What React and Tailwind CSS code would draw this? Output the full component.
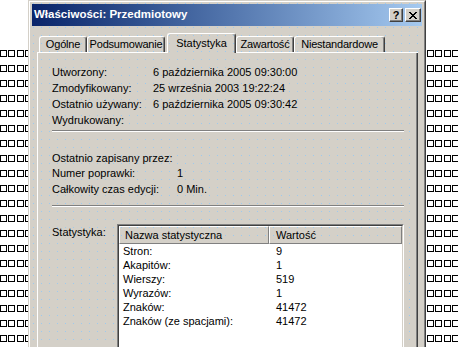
const F = "font-['Liberation_Sans',Arial,sans-serif]";

function Squares({ n }) {
  return (
    <div className="flex flex-col gap-[8px] pt-[50px]">
      {Array.from({ length: 20 }).map((_, r) => (
        <div key={r} className="flex gap-[1.3px] h-[7px]">
          {Array.from({ length: n }).map((_, c) => (
            <div key={c} className="w-[7px] h-[7px] shrink-0 border border-black" />
          ))}
        </div>
      ))}
    </div>
  );
}

function CloseGlyph() {
  const px = [];
  for (let i = 0; i < 7; i++) {
    px.push([i, i], [i + 1, i], [6 - i, i], [7 - i, i]);
  }
  return (
    <svg width="8" height="7" viewBox="0 0 8 7" shapeRendering="crispEdges">
      {px.map(([x, y], k) => (
        <rect key={k} x={x} y={y} width="1" height="1" fill="#000" />
      ))}
    </svg>
  );
}

function CapBtn({ w, children }) {
  return (
    <div
      className={`${w} h-[14px] bg-[#d4d0c8] border-t border-l border-t-white border-l-white border-r border-b border-r-[#404040] border-b-[#404040] shadow-[inset_-1px_-1px_0_#808080] flex items-center justify-center`}
    >
      {children}
    </div>
  );
}

function Tab({ w, label }) {
  return (
    <div className={`${w} h-[17px] shrink-0 border-b border-b-white`}>
      <div className="h-[16px] border-t border-l border-t-white border-l-white border-r border-r-[#404040] shadow-[inset_-1px_0_0_#808080] rounded-t-[3px] flex items-center justify-center whitespace-nowrap tracking-[-0.2px]">
        {label}
      </div>
    </div>
  );
}

function Row({ label, value, lw, h = "h-[16px]" }) {
  return (
    <div className={`flex ${h} items-center whitespace-nowrap`}>
      <div className={`${lw} shrink-0`}>{label}</div>
      <div>{value}</div>
    </div>
  );
}

function Sep() {
  return <div className="h-[2px] border-t border-t-[#808080] border-b border-b-white" />;
}

const stats = [
  ["Stron:", "9"],
  ["Akapitów:", "1"],
  ["Wierszy:", "519"],
  ["Wyrazów:", "1"],
  ["Znaków:", "41472"],
  ["Znaków (ze spacjami):", "41472"],
];

export default function App() {
  return (
    <div className={`${F} w-[458px] h-[347px] bg-white flex overflow-hidden text-[11px] text-black`}>
      <div className="w-[28px] shrink-0 overflow-hidden">
        <Squares n={4} />
      </div>

      <div className="w-[398px] h-[380px] shrink-0 border-t border-l border-t-[#d4d0c8] border-l-[#d4d0c8] border-r border-b border-r-[#404040] border-b-[#404040]">
        <div className="h-full border-t border-l border-t-white border-l-white border-r border-b border-r-[#808080] border-b-[#808080] p-[2px] bg-[#d4d0c8] [background-image:linear-gradient(to_bottom,#d4d0c8_1px,transparent_1px,transparent_2px,#d4d0c8_2px),linear-gradient(to_right,transparent_3px,#9ccaf0_3px,#9ccaf0_4px,transparent_4px)] [background-size:8px_8px] flex flex-col">
          {/* Title bar */}
          <div className="h-[22px] shrink-0 bg-linear-to-r from-[#0a246a] to-[#a6caf0] flex items-center pl-[2px] pr-[1px]">
            <div className="flex-1 text-white font-bold text-[11.5px] leading-none whitespace-nowrap">Właściwości: Przedmiotowy</div>
            <div className="flex gap-[2px]">
              <CapBtn w="w-[14px]">
                <span className="font-bold text-[11px] leading-none">?</span>
              </CapBtn>
              <CapBtn w="w-[16px]">
                <CloseGlyph />
              </CapBtn>
            </div>
          </div>

          {/* Tabs */}
          <div className="ml-[5px] mr-[4px] mt-[7px] h-[20px] flex items-end shrink-0">
            <div className="w-[2px] h-[1px] bg-white shrink-0" />
            <Tab w="w-[48px]" label="Ogólne" />
            <Tab w="w-[78px]" label="Podsumowanie" />
            <div className="w-[2px] h-[1px] bg-white shrink-0" />
            <div className="w-[69px] h-[20px] shrink-0 border-t border-l border-t-white border-l-white border-r border-r-[#404040] shadow-[inset_-1px_0_0_#808080] rounded-t-[3px] flex items-center justify-center pb-[1px] whitespace-nowrap">
              Statystyka
            </div>
            <Tab w="w-[58px]" label="Zawartość" />
            <Tab w="w-[91px]" label="Niestandardowe" />
            <div className="flex-1 h-[1px] bg-white" />
          </div>

          {/* Panel */}
          <div className="ml-[5px] mr-[4px] flex-1 border-l border-l-white border-r border-r-[#404040] shadow-[inset_-1px_0_0_#808080] pl-[14px] pr-[13px] pt-[12px] flex flex-col">
            <Row lw="w-[101px]" h="h-[15px]" label="Utworzony:" value="6 października 2005 09:30:00" />
            <Row lw="w-[101px]" label="Zmodyfikowany:" value="25 września 2003 19:22:24" />
            <Row lw="w-[101px]" label="Ostatnio używany:" value="6 października 2005 09:30:42" />
            <Row lw="w-[101px]" label="Wydrukowany:" value="" />
            <div className="mt-[2px]">
              <Sep />
            </div>
            <div className="mt-[18px]">
              <Row lw="w-[125px]" label="Ostatnio zapisany przez:" value="" />
              <Row lw="w-[125px]" h="h-[15px]" label="Numer poprawki:" value="1" />
              <Row lw="w-[125px]" label="Całkowity czas edycji:" value="0 Min." />
            </div>
            <div className="mt-[8px]">
              <Sep />
            </div>
            <div className="mt-[17px] flex">
              <div className="w-[65px] shrink-0 h-[16px] flex items-center">Statystyka:</div>
              <div className="flex-1 h-[140px] border-t border-l border-t-[#808080] border-l-[#808080] border-r border-b border-r-white border-b-white">
                <div className="h-full border-t border-l border-t-[#404040] border-l-[#404040] border-r border-b border-r-[#d4d0c8] border-b-[#d4d0c8] flex flex-col">
                  <div className="h-[18px] flex shrink-0">
                    <div className="w-[150px] shrink-0 border-t border-l border-t-white border-l-white border-r border-b border-r-[#808080] border-b-[#808080] flex items-center pl-[5px] whitespace-nowrap">
                      Nazwa statystyczna
                    </div>
                    <div className="flex-1 border-t border-l border-t-white border-l-white border-r border-b border-r-[#808080] border-b-[#808080] flex items-center pl-[6px]">
                      Wartość
                    </div>
                  </div>
                  <div className="flex-1 bg-white">
                    {stats.map(([k, v]) => (
                      <div key={k} className="flex h-[14px] items-center whitespace-nowrap">
                        <div className="w-[150px] shrink-0 pl-[4px]">{k}</div>
                        <div className="pl-[7px]">{v}</div>
                      </div>
                    ))}
                  </div>
                </div>
              </div>
            </div>
          </div>
        </div>
      </div>

      <div className="w-[32px] shrink-0 overflow-hidden pl-[1px]">
        <Squares n={4} />
      </div>
    </div>
  );
}
